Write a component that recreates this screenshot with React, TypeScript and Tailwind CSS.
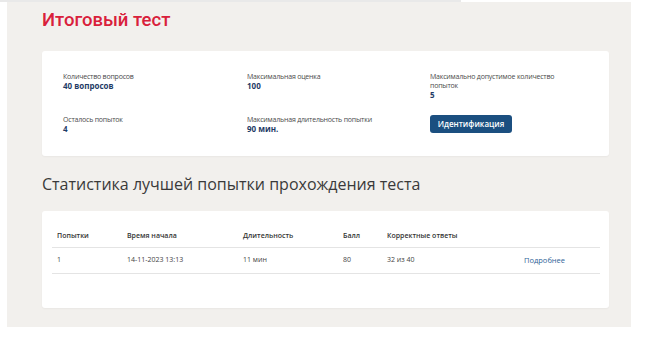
const font = { fontFamily: '"Open Sans", "Liberation Sans", sans-serif' };
const titleFont = { fontFamily: 'Roboto, "Open Sans", sans-serif' };

type InfoProps = { label: string; value: string };

function Info({ label, value }: InfoProps) {
  return (
    <div>
      <div className="text-[7px] leading-[9px] tracking-[-0.2px] text-[#4a4a4a]">{label}</div>
      <div className="text-[8px] leading-[10px] font-bold text-[#1f3b66]">{value}</div>
    </div>
  );
}

const cols = ["w-[70px]", "w-[116px]", "w-[100px]", "w-[44px]", "w-[137px]", "flex-1"];

export default function App() {
  const headers = ["Попытки", "Время начала", "Длительность", "Балл", "Корректные ответы", ""];
  const row = ["1", "14-11-2023 13:13", "11 мин", "80", "32 из 40"];

  return (
    <div className="w-[650px] h-[356px] bg-white" style={font}>
      <div className="h-[2px] w-[461px] bg-[#e9e9e9]" />
      <div className="ml-[7px] w-[624px] h-[325px] bg-[#f2f0ed] pt-[6px] pl-[35px]">
        <h1 className="text-[18.5px] leading-[24px] font-medium text-[#d9203b]" style={titleFont}>
          Итоговый тест
        </h1>

        <section className="mt-[19px] w-[567px] h-[105px] rounded-[3px] bg-white shadow-[0_1px_2px_rgba(0,0,0,0.04)] pt-[21px] pl-[21px]">
          <div className="grid grid-cols-[184px_183px_1fr] gap-y-[15px]">
            <Info label="Количество вопросов" value="40 вопросов" />
            <Info label="Максимальная оценка" value="100" />
            <div className="w-[135px]">
              <Info label="Максимально допустимое количество попыток" value="5" />
            </div>
            <Info label="Осталось попыток" value="4" />
            <Info label="Максимальная длительность попытки" value="90 мин." />
            <div>
              <button
                type="button"
                className="block h-[18px] w-[82px] rounded-[3px] bg-[#1b4f80] text-[8px] font-semibold text-white"
              >
                Идентификация
              </button>
            </div>
          </div>
        </section>

        <h2 className="mt-[18px] text-[16px] leading-[20px] text-[#3a3a3a]">
          Статистика лучшей попытки прохождения теста
        </h2>

        <section className="mt-[17px] w-[567px] h-[97px] rounded-[3px] bg-white shadow-[0_1px_2px_rgba(0,0,0,0.04)] pt-[15px] pl-[10px] pr-[9px]">
          <div className="flex h-[22px] items-center border-b border-[#e4e4e4] text-[7px] font-semibold text-[#333]">
            {headers.map((h, i) => (
              <div key={i} className={`${cols[i]} pl-[5px]`}>
                {h}
              </div>
            ))}
          </div>
          <div className="flex h-[26px] items-center border-b border-[#e4e4e4] text-[7px] text-[#444]">
            {row.map((c, i) => (
              <div key={i} className={`${cols[i]} pl-[5px]`}>
                {c}
              </div>
            ))}
            <div className="flex-1 pl-[5px] text-[7.5px] text-[#2f6497]">Подробнее</div>
          </div>
        </section>
      </div>
    </div>
  );
}
